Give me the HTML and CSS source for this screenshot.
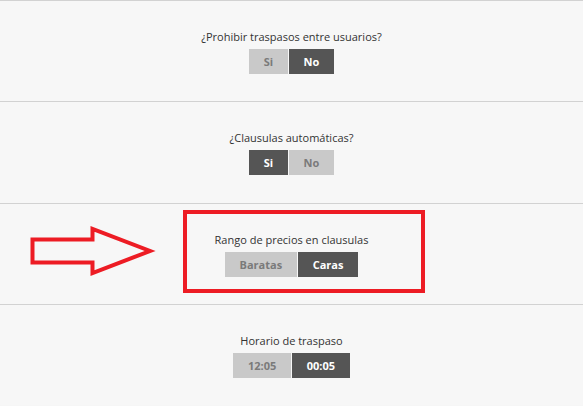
FILE: index.html
```html
<!DOCTYPE html>
<html lang="es">
<head>
<meta charset="utf-8">
<title>Ajustes</title>
<link rel="stylesheet" href="styles.css">
</head>
<body>
<div class="page">
  <section class="setting">
    <p class="label">¿Prohibir traspasos entre usuarios?</p>
    <div class="toggle">
      <span class="opt">Si</span><span class="opt on">No</span>
    </div>
  </section>
  <section class="setting">
    <p class="label">¿Clausulas automáticas?</p>
    <div class="toggle">
      <span class="opt on">Si</span><span class="opt">No</span>
    </div>
  </section>
  <section class="setting">
    <p class="label">Rango de precios en clausulas</p>
    <div class="toggle">
      <span class="opt">Baratas</span><span class="opt on">Caras</span>
    </div>
  </section>
  <section class="setting">
    <p class="label">Horario de traspaso</p>
    <div class="toggle">
      <span class="opt">12:05</span><span class="opt on">00:05</span>
    </div>
  </section>

  <div class="mark-box"></div>
  <svg class="mark-arrow" width="140" height="64" viewBox="0 0 140 64">
    <path d="M2.5 14.5 H62.5 V4 L120 26 L62.5 48 V37.5 H2.5 Z" fill="none" stroke="#ed1c24" stroke-width="4" stroke-linejoin="miter"/>
  </svg>
</div>
</body>
</html>
```
FILE: styles.css
```css
* { box-sizing: border-box; }
html, body { margin: 0; padding: 0; }
body {
  background: #f6f6f6;
  font-family: "Open Sans", "Liberation Sans", sans-serif;
  color: #333;
}
.page {
  position: relative;
  width: 583px;
  height: 406px;
  overflow: hidden;
}
.setting {
  height: 101.333px;
  border-top: 1px solid #d2d2d2;
  background: #f7f7f7;
  display: flex;
  flex-direction: column;
  align-items: center;
  padding-top: 28px;
}
.label {
  margin: 0 0 4px;
  font-size: 11px;
  line-height: 16px;
  color: #333;
}
.toggle {
  display: flex;
  gap: 1.5px;
}
.opt {
  display: block;
  height: 25px;
  line-height: 25px;
  padding: 0 14.5px;
  font-size: 11px;
  font-weight: 700;
  background: #c9c9c9;
  color: #7a7a7a;
}
.opt.on {
  background: #555555;
  color: #ffffff;
}
.mark-box {
  position: absolute;
  left: 183px;
  top: 210px;
  width: 242px;
  height: 83px;
  border: 4.5px solid #ed1c24;
}
.mark-arrow {
  position: absolute;
  left: 30px;
  top: 225px;
}
```
